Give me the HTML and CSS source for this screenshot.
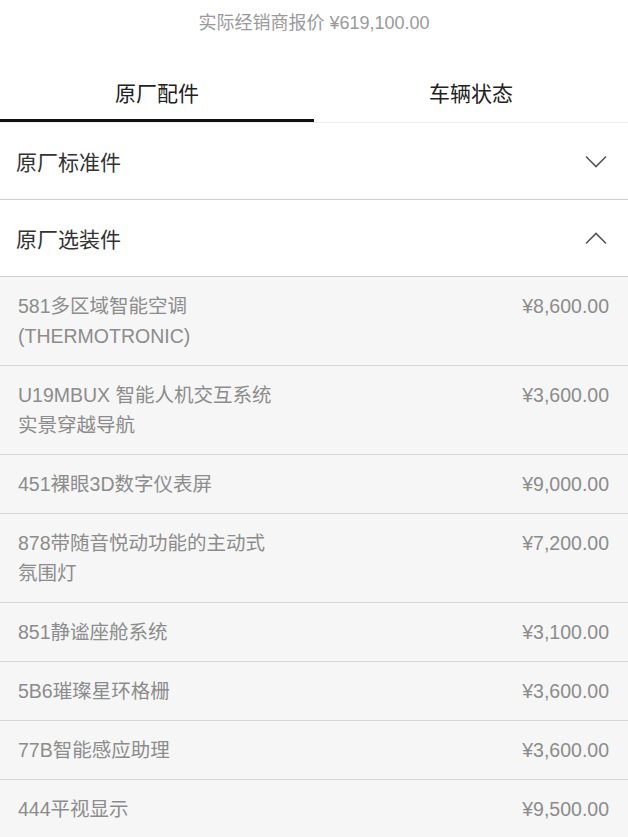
FILE: index.html
```html
<!DOCTYPE html>
<html lang="zh">
<head>
<meta charset="utf-8">
<link rel="stylesheet" href="styles.css">
</head>
<body>
<div class="page">
  <div class="dealer">实际经销商报价 ¥619,100.00</div>
  <div class="tabs">
    <div class="tab active">原厂配件</div>
    <div class="tab">车辆状态</div>
  </div>
  <div class="section">
    <span class="section-title">原厂标准件</span>
    <svg class="chev" width="22" height="13" viewBox="0 0 22 13"><path d="M1 1.5 L11 11.5 L21 1.5" fill="none" stroke="#555" stroke-width="1.6"/></svg>
  </div>
  <div class="section">
    <span class="section-title">原厂选装件</span>
    <svg class="chev" width="22" height="13" viewBox="0 0 22 13"><path d="M1 11.5 L11 1.5 L21 11.5" fill="none" stroke="#555" stroke-width="1.6"/></svg>
  </div>
  <div class="list">
    <div class="item"><div class="name">581多区域智能空调<br>(THERMOTRONIC)</div><div class="price">¥8,600.00</div></div>
    <div class="item"><div class="name">U19MBUX 智能人机交互系统<br>实景穿越导航</div><div class="price">¥3,600.00</div></div>
    <div class="item"><div class="name">451裸眼3D数字仪表屏</div><div class="price">¥9,000.00</div></div>
    <div class="item"><div class="name">878带随音悦动功能的主动式<br>氛围灯</div><div class="price">¥7,200.00</div></div>
    <div class="item"><div class="name">851静谧座舱系统</div><div class="price">¥3,100.00</div></div>
    <div class="item"><div class="name">5B6璀璨星环格栅</div><div class="price">¥3,600.00</div></div>
    <div class="item"><div class="name">77B智能感应助理</div><div class="price">¥3,600.00</div></div>
    <div class="item"><div class="name">444平视显示</div><div class="price">¥9,500.00</div></div>
  </div>
</div>
</body>
</html>
```

FILE: styles.css
```css
html, body {
  margin: 0;
  padding: 0;
  background: #ffffff;
}
body {
  font-family: "Liberation Sans", "Noto Sans CJK SC", sans-serif;
  width: 628px;
  overflow: hidden;
}
.page {
  display: flex;
  flex-direction: column;
}
.dealer {
  height: 46px;
  line-height: 46px;
  text-align: center;
  font-size: 18px;
  color: #9a9a9a;
}
.tabs {
  display: flex;
  margin-top: 16px;
  border-bottom: 1px solid #ececec;
}
.tab {
  flex: 1;
  text-align: center;
  font-size: 21px;
  color: #222;
  height: 60px;
  line-height: 64px;
  box-sizing: border-box;
  border-bottom: 3px solid transparent;
}
.tab.active {
  border-bottom-color: #111;
}
.section {
  display: flex;
  align-items: center;
  justify-content: space-between;
  height: 76px;
  padding: 0 21px 0 16px;
  border-bottom: 1px solid #cfcfcf;
}
.section-title {
  font-size: 21px;
  color: #333;
}
.chev {
  display: block;
}
.list {
  background: #f6f6f6;
}
.item {
  display: flex;
  justify-content: space-between;
  align-items: flex-start;
  padding: 14px 19px 14px 18px;
  border-bottom: 1px solid #d6d6d6;
  font-size: 19.5px;
  line-height: 30px;
  color: #8c8c8c;
}
.price {
  white-space: nowrap;
}
```
